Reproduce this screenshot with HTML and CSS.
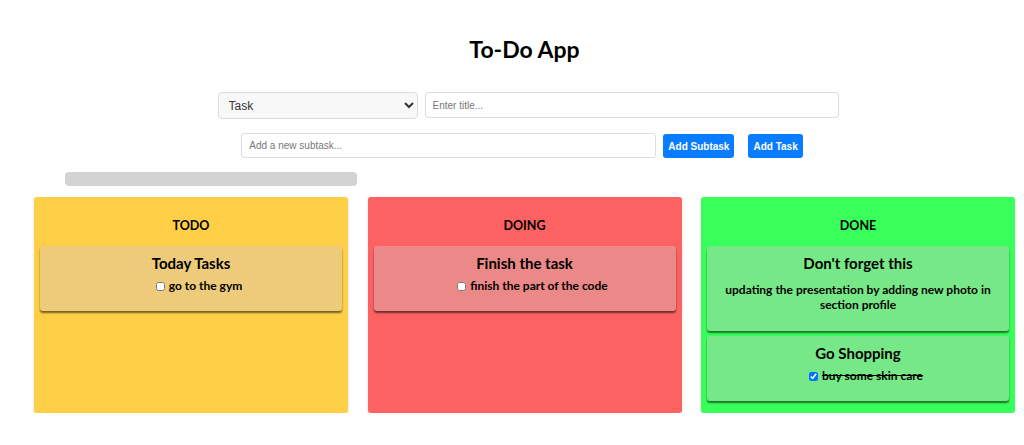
FILE: index.html
```html
<!DOCTYPE html>
<html lang="en">
<head>
  <meta charset="UTF-8">
  <title>To-Do App</title>
  <link rel="stylesheet" href="styles.css">
</head>
<body>
  <div class="app">
    <h1>To-Do App</h1>

    <div class="form-row">
      <select class="type-select">
        <option>Task</option>
      </select>
      <input class="title-input" placeholder="Enter title...">
    </div>
    <div class="form-row row2">
      <input class="subtask-input" placeholder="Add a new subtask...">
      <button class="btn">Add Subtask</button>
      <button class="btn">Add Task</button>
    </div>

    <div class="subtask-list"></div>

    <div class="board">
      <div class="column todo">
        <h3>TODO</h3>
        <div class="card">
          <h4>Today Tasks</h4>
          <label class="sub"><input type="checkbox">go to the gym</label>
        </div>
      </div>
      <div class="column doing">
        <h3>DOING</h3>
        <div class="card">
          <h4>Finish the task</h4>
          <label class="sub"><input type="checkbox">finish the part of the code</label>
        </div>
      </div>
      <div class="column done">
        <h3>DONE</h3>
        <div class="card">
          <h4>Don't forget this</h4>
          <p class="note">updating the presentation by adding new photo in section profile</p>
        </div>
        <div class="card">
          <h4>Go Shopping</h4>
          <label class="sub checked"><input type="checkbox" checked>buy some skin care</label>
        </div>
      </div>
    </div>
  </div>
</body>
</html>
```

FILE: styles.css
```css
*{box-sizing:border-box}
body{margin:0;font-family:Lato,'Noto Sans',sans-serif;color:#000;background:#fff}
.app{width:1049px;padding:0 34px}
h1{margin:0;padding-top:34px;height:92px;text-align:center;font-size:23px;line-height:30px;font-weight:700}

.form-row{display:flex;justify-content:center;gap:7px;padding-left:7px}
.row2{margin-top:14px;padding-left:0;padding-right:5px}
.type-select{
  width:200px;height:27px;font:12px 'Liberation Sans',sans-serif;color:#333;
  background:#f8f8f8;border:1px solid #ddd;border-radius:4px;padding:0 6px
}
.title-input,.subtask-input{
  height:26px;font:10px 'Liberation Sans',sans-serif;border:1px solid #ddd;
  border-radius:3px;padding:0 7px;background:#fff
}
.title-input{width:414px}
.subtask-input{width:415px;height:25px}
.title-input::placeholder,.subtask-input::placeholder{color:#777}
.btn{
  height:24px;padding:0 5px;margin-top:1px;border:none;border-radius:3px;
  background:#0a7cff;color:#fff;font:bold 10px 'Liberation Sans',sans-serif;cursor:pointer
}
.btn + .btn{margin-left:7px}

.subtask-list{
  width:292px;height:14px;margin:14px 0 11px 31px;
  background:#d3d3d3;border-radius:4px
}

.board{display:flex;justify-content:space-between}
.column{
  width:314px;padding:6px 6px 12px;border-radius:3px;
  box-shadow:0 1px 3px rgba(0,0,0,.15)
}
.column h3{margin:13px 0 11px;text-align:center;font-size:12.5px;font-weight:700;line-height:19px}
.todo{background:#ffcf48}
.doing{background:#fd6262}
.done{background:#38ff5a}
.card{
  border-radius:3px;padding:6px 8px 17px;text-align:center;
  box-shadow:0 2px 2px rgba(0,0,0,.55)
}
.card + .card{margin-top:5px}
.todo .card{background:#edcb7a}
.doing .card{background:#eb8888}
.done .card{background:#77e887}
.card h4{margin:0 0 4px;font-size:15px;line-height:22px;font-weight:700}
.sub{
  display:flex;justify-content:center;align-items:center;padding-left:16px;
  font-size:12px;font-weight:700;line-height:16px
}
.sub input{width:9px;height:9px;margin:0 4px 0 0}
.sub.checked{text-decoration:line-through}
.note{margin:8px 0 2px;font-size:12px;font-weight:700;line-height:15px}
```
